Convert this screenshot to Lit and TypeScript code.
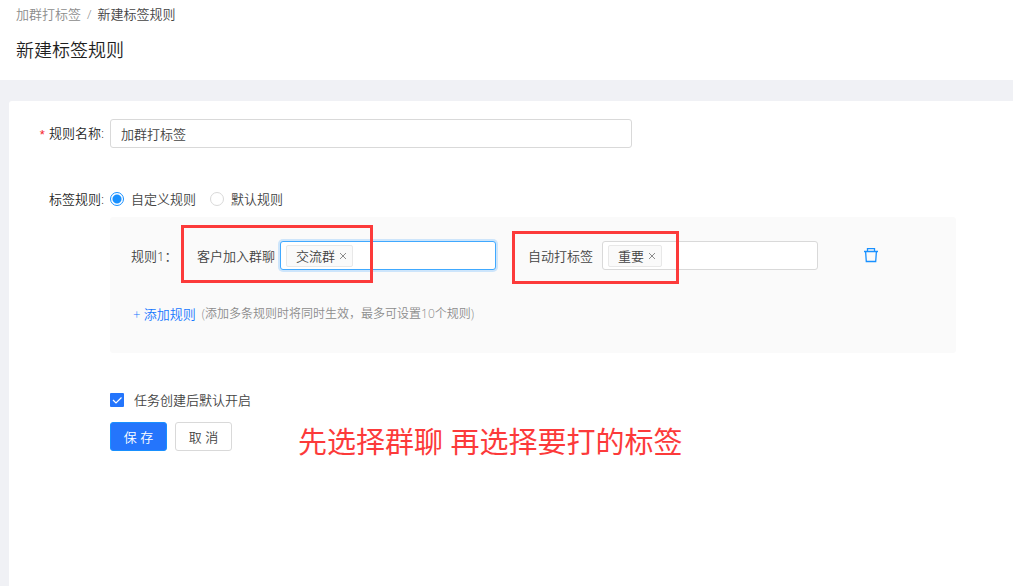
import { LitElement, html, css, svg } from "lit";
import { customElement, property, state } from "lit/decorators.js";

const closeIcon = html`<svg viewBox="0 0 8 8" width="8" height="8" aria-hidden="true">
  ${svg`<path d="M1 1L7 7M7 1L1 7" fill="none" stroke="currentColor" stroke-width="1" />`}
</svg>`;

@customElement("tag-select")
export class TagSelect extends LitElement {
  @property() label = "";
  @property({ type: Array }) tags: string[] = [];
  @property({ type: Boolean, reflect: true }) active = false;

  static styles = css`
    :host {
      display: flex;
      align-items: center;
      font: inherit;
    }
    .label {
      white-space: nowrap;
      margin-right: var(--label-gap, 5px);
    }
    .box {
      box-sizing: border-box;
      display: flex;
      align-items: center;
      gap: 4px;
      width: 216px;
      height: 29px;
      padding: 0 5px;
      border: 1px solid #d9d9d9;
      border-radius: 3px;
      background: #fff;
    }
    :host([active]) .box {
      border-color: #40a9ff;
      box-shadow: 0 0 0 2px rgba(24, 144, 255, 0.2);
    }
    .tag {
      box-sizing: border-box;
      display: flex;
      align-items: center;
      height: 22px;
      padding: 0 5px 0 9px;
      border: 1px solid #e8e8e8;
      border-radius: 2px;
      background: #fafafa;
      white-space: nowrap;
    }
    .close {
      display: flex;
      margin: 0 0 0 4px;
      padding: 0;
      border: 0;
      background: none;
      color: #8c8c8c;
      cursor: pointer;
    }
    .search {
      flex: 1;
      min-width: 0;
      padding: 0;
      border: 0;
      outline: 0;
      background: none;
      font: inherit;
    }
  `;

  render() {
    return html`
      <label class="label" for="search">${this.label}</label>
      <div class="box">
        ${this.tags.map(
          (tag) => html`<span class="tag"
            >${tag}<button
              class="close"
              type="button"
              aria-label="移除"
              @click=${() => (this.tags = this.tags.filter((t) => t !== tag))}
            >
              ${closeIcon}
            </button></span
          >`
        )}
        <input class="search" id="search" type="text" autocomplete="off" />
      </div>
    `;
  }
}

@customElement("app-root")
export class AppRoot extends LitElement {
  @state() private mode = "custom";

  static styles = css`
    :host {
      display: flex;
      flex-direction: column;
      min-height: 100vh;
      background: #f0f1f5;
      color: #434343;
      font: 13px/20px "Open Sans", "Noto Sans CJK SC", sans-serif;
      font-weight: 350;
    }
    .header {
      padding: 4px 16px 16px;
      background: #fff;
    }
    .crumbs {
      display: flex;
      gap: 6px;
    }
    .crumbs a {
      color: #8c8c8c;
      text-decoration: none;
    }
    .slash {
      color: #8c8c8c;
    }
    .title {
      margin: 12px 0 0;
      color: #1f1f1f;
      font-size: 18px;
      line-height: 28px;
      font-weight: inherit;
    }
    .card {
      flex: 1;
      margin: 21px 0 0 9px;
      padding: 18px 57px 0 29px;
      border-radius: 3px 0 0 0;
      background: #fff;
    }
    .form {
      display: grid;
      grid-template-columns: 66px minmax(0, 846px);
      column-gap: 6px;
      margin: 0;
    }
    .label {
      display: flex;
      justify-content: flex-end;
      color: #1f1f1f;
      line-height: 20px;
      white-space: nowrap;
    }
    .required::before {
      content: "*";
      margin-right: 4px;
      color: #f5222d;
      line-height: 24px;
      font-family: "Liberation Sans", sans-serif;
    }
    .name-label {
      padding-top: 4px;
    }
    .name {
      box-sizing: border-box;
      width: 100%;
      max-width: 522px;
      height: 29px;
      padding: 0 10px;
      border: 1px solid #d9d9d9;
      border-radius: 3px;
      outline: 0;
      background: #fff;
      color: inherit;
      font: inherit;
    }
    .rules,
    .rules-label {
      margin-top: 41px;
    }
    .radios {
      display: flex;
      gap: 14px;
    }
    .radio {
      display: flex;
      align-items: center;
      gap: 7px;
    }
    .radio input {
      appearance: none;
      box-sizing: border-box;
      width: 14px;
      height: 14px;
      margin: 0;
      border: 1px solid #d9d9d9;
      border-radius: 50%;
      background: #fff;
    }
    .radio input:checked {
      border-color: #1890ff;
      background: radial-gradient(circle, #1890ff 0 4px, #fff 5px);
    }
    .panel {
      position: relative;
      box-sizing: border-box;
      margin-top: 8px;
      padding: 24px 21px 29px;
      border-radius: 3px;
      background: #fafafa;
    }
    .rule {
      display: flex;
      align-items: center;
    }
    .rule-name {
      width: 66px;
    }
    .tagging {
      --label-gap: 9px;
      margin-left: 32px;
    }
    .trash {
      display: flex;
      margin-left: 45px;
      padding: 0;
      border: 0;
      background: none;
      color: #1890ff;
      cursor: pointer;
    }
    .more {
      display: flex;
      align-items: center;
      gap: 6px;
      margin-top: 34px;
    }
    .add {
      padding: 0 0 0 2px;
      border: 0;
      background: none;
      color: #1677ff;
      font: inherit;
      cursor: pointer;
    }
    .hint {
      color: #8c8c8c;
      font-size: 12px;
    }
    .footer {
      grid-column: 2;
      margin-top: 37px;
    }
    .check {
      display: flex;
      align-items: center;
      gap: 10px;
      width: fit-content;
    }
    .check input {
      appearance: none;
      width: 14px;
      height: 14px;
      margin: 0;
      border-radius: 1px;
      background: #2475fc;
    }
    .tick {
      display: grid;
    }
    .tick > * {
      grid-area: 1 / 1;
    }
    .tick svg {
      pointer-events: none;
    }
    .actions {
      position: relative;
      display: flex;
      gap: 8px;
      margin-top: 12px;
    }
    .btn {
      box-sizing: border-box;
      width: 57px;
      height: 29px;
      padding: 0;
      border: 1px solid #d9d9d9;
      border-radius: 3px;
      background: #fff;
      color: inherit;
      font: inherit;
      cursor: pointer;
    }
    .primary {
      border-color: #1890ff;
      background: #2475fc;
      color: #fff;
    }
    .mark {
      position: absolute;
      box-sizing: border-box;
      border: 3px solid #fc3a3a;
      pointer-events: none;
    }
    .mark-group {
      left: 71px;
      top: 8px;
      width: 192px;
      height: 58px;
    }
    .mark-tag {
      left: 402px;
      top: 14px;
      width: 167px;
      height: 53px;
    }
    .note {
      position: absolute;
      left: 188px;
      top: 0;
      margin: 0;
      color: #fc3a3a;
      font-size: 29px;
      font-weight: 400;
      line-height: 40px;
      white-space: nowrap;
    }
  `;

  private radio(value: string, text: string) {
    return html`<label class="radio">
      <input
        type="radio"
        name="mode"
        .checked=${this.mode === value}
        @change=${() => (this.mode = value)}
      />${text}
    </label>`;
  }

  render() {
    return html`
      <header class="header">
        <nav class="crumbs">
          <a href="#">加群打标签</a><span class="slash">/</span><span>新建标签规则</span>
        </nav>
        <h1 class="title">新建标签规则</h1>
      </header>
      <main class="card">
        <form class="form" @submit=${(e: Event) => e.preventDefault()}>
          <label class="label required name-label" for="name">规则名称:</label>
          <input class="name" id="name" type="text" value="加群打标签" />

          <span class="label rules-label" id="rules-label">标签规则:</span>
          <div class="rules">
            <div class="radios" role="radiogroup" aria-labelledby="rules-label">
              ${this.radio("custom", "自定义规则")} ${this.radio("default", "默认规则")}
            </div>
            <section class="panel">
              <div class="rule">
                <span class="rule-name">规则1：</span>
                <tag-select label="客户加入群聊" .tags=${["交流群"]} active></tag-select>
                <tag-select class="tagging" label="自动打标签" .tags=${["重要"]}></tag-select>
                <button class="trash" type="button" aria-label="删除规则">
                  <svg viewBox="0 0 16 16" width="16" height="16" aria-hidden="true">
                    <path
                      d="M1 3.5H15M4.5 3V0.6H11.5V3M2.6 3.5L3.3 13.5H12.7L13.4 3.5"
                      fill="none"
                      stroke="currentColor"
                      stroke-width="1.3"
                    />
                  </svg>
                </button>
              </div>
              <div class="more">
                <button class="add" type="button">+ 添加规则</button>
                <span class="hint">(添加多条规则时将同时生效，最多可设置10个规则)</span>
              </div>
              <div class="mark mark-group"></div>
              <div class="mark mark-tag"></div>
            </section>
          </div>

          <div class="footer">
            <label class="check">
              <span class="tick">
                <input type="checkbox" checked />
                <svg viewBox="0 0 14 14" width="14" height="14" aria-hidden="true">
                  <path d="M3 7L6 10L11.5 4.5" fill="none" stroke="#fff" stroke-width="1.2" />
                </svg>
              </span>
              任务创建后默认开启
            </label>
            <div class="actions">
              <button class="btn primary" type="submit">保 存</button>
              <button class="btn" type="button">取 消</button>
              <p class="note">先选择群聊 再选择要打的标签</p>
            </div>
          </div>
        </form>
      </main>
    `;
  }
}
